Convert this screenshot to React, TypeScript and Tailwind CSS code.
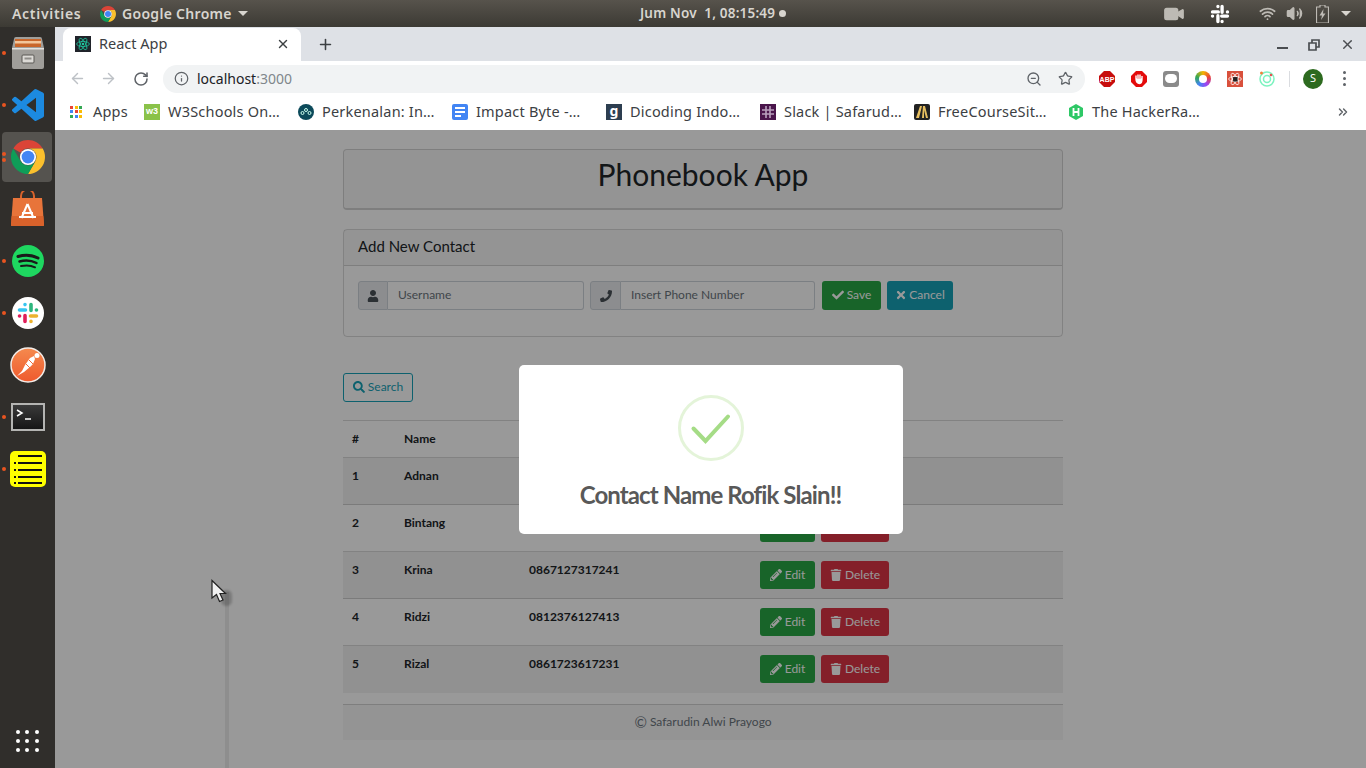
import React from 'react';
import {
  ArrowLeft,
  ArrowRight,
  RotateCw,
  Info,
  ZoomOut,
  Star,
  Plus,
  X,
  ChevronsRight,
  Video,
  Volume2,
  Wifi,
} from 'lucide-react';
import { FaUser, FaPhoneAlt, FaCheck, FaTimes, FaSearch, FaPencilAlt, FaTrash } from 'react-icons/fa';

const contacts = [
  { id: 1, name: 'Adnan', phone: '0812736127312' },
  { id: 2, name: 'Bintang', phone: '0812637126371' },
  { id: 3, name: 'Krina', phone: '0867127317241' },
  { id: 4, name: 'Ridzi', phone: '0812376127413' },
  { id: 5, name: 'Rizal', phone: '0861723617231' },
];

const ChromeLogo: React.FC<{ size: number }> = ({ size }) => (
  <svg width={size} height={size} viewBox="4 4 40 40">
    <path fill="#db4437" d="M6.68 14A20 20 0 0 1 41.32 14H24A10 10 0 0 0 15.34 19Z" />
    <path fill="#fbc02d" d="M41.32 14A20 20 0 0 1 24 44L32.66 29A10 10 0 0 0 24 14Z" />
    <path fill="#0f9d58" d="M24 44A20 20 0 0 1 6.68 14L15.34 29A10 10 0 0 0 32.66 29Z" />
    <circle cx="24" cy="24" r="9.5" fill="#fff" />
    <circle cx="24" cy="24" r="7.5" fill="#4285f4" />
  </svg>
);

const SlackMark: React.FC<{ size: number }> = ({ size }) => (
  <svg width={size} height={size} viewBox="0 0 24 24" strokeLinecap="round" strokeWidth="3.6" fill="none">
    <path stroke="#36c5f0" d="M3.5 9h6M9 3.5v.1" />
    <path stroke="#2eb67d" d="M15 3.5v6M20.5 9h-.1" />
    <path stroke="#ecb22e" d="M14.5 15h6M15 20.5v-.1" />
    <path stroke="#e01e5a" d="M9 14.5v6M3.5 15h.1" />
  </svg>
);

const DockItem: React.FC<{ dots?: number; active?: boolean; children: React.ReactNode }> = ({ dots = 0, active, children }) => (
  <div className="relative flex h-[52px] w-[55px] items-center justify-center">
    {active && <div className="absolute left-[2px] top-[1px] h-[50px] w-[50px] rounded-[4px] bg-[#55534f]" />}
    {dots > 0 && (
      <div className="absolute left-[2px] top-0 flex h-full flex-col justify-center gap-[2px]">
        {Array.from({ length: dots }).map((_, i) => (
          <span key={i} className="h-[4px] w-[4px] rounded-full bg-[#e95420]" />
        ))}
      </div>
    )}
    <div className="relative">{children}</div>
  </div>
);

const Dock = () => (
  <div className="flex h-full w-[55px] shrink-0 flex-col bg-[#302e2b]">
    <DockItem dots={1}>
      <svg width="32" height="34" viewBox="0 0 32 34">
        <path d="M2 3a2 2 0 0 1 2-2h24a2 2 0 0 1 2 2l2 9v19a2 2 0 0 1-2 2H2a2 2 0 0 1-2-2V12Z" fill="#a09e9a" />
        <rect x="3" y="3" width="26" height="8" fill="#c9662a" />
        <rect x="3" y="5" width="26" height="2.500" fill="#f2c59a" />
        <rect x="0" y="12" width="32" height="1.500" fill="#e4e2de" />
        <rect x="10" y="19" width="12" height="8" rx="1" fill="#dcdad6" stroke="#5a5854" />
        <rect x="12.500" y="21.500" width="7" height="2" fill="#8f8d89" />
      </svg>
    </DockItem>
    <DockItem dots={1}>
      <svg width="32" height="32" viewBox="0 0 24 24">
        <path
          fill="#1c8ae0"
          d="M23.15 2.587L18.21.21a1.494 1.494 0 0 0-1.705.29l-9.46 8.63-4.12-3.128a.999.999 0 0 0-1.276.057L.327 7.261A1 1 0 0 0 .326 8.74L3.899 12 .326 15.26a1 1 0 0 0 .001 1.479L1.65 17.94a.999.999 0 0 0 1.276.057l4.12-3.128 9.46 8.63a1.492 1.492 0 0 0 1.704.29l4.942-2.377A1.5 1.5 0 0 0 24 20.06V3.939a1.5 1.5 0 0 0-.85-1.352zm-5.146 14.861L10.826 12l7.178-5.448v10.896z"
        />
      </svg>
    </DockItem>
    <DockItem dots={2} active>
      <ChromeLogo size={34} />
    </DockItem>
    <DockItem>
      <svg width="33" height="36" viewBox="0 0 33 36">
        <path d="M10 8V5a6 6 0 0 1 13 0v3" fill="none" stroke="#d9622b" strokeWidth="2" />
        <path d="M2 7h29l2 27a1 1 0 0 1-1 1H1a1 1 0 0 1-1-1Z" fill="#e8743a" />
        <path d="M.7 25h31.600l.7 9a1 1 0 0 1-1 1H1a1 1 0 0 1-1-1Z" fill="#d9622b" />
        <path d="M16.500 13l-6 14M16.500 13l6 14M11 22h11M8 26h17" stroke="#fff" strokeWidth="2" fill="none" />
      </svg>
    </DockItem>
    <DockItem dots={1}>
      <svg width="32" height="32" viewBox="0 0 32 32" fill="none" strokeLinecap="round">
        <circle cx="16" cy="16" r="16" fill="#1ed760" />
        <path d="M6 11.5c7-2 14-1.500 20 1.500" stroke="#1a1a1a" strokeWidth="3" />
        <path d="M7.500 16.500c6-1.500 12-1 17 1.500" stroke="#1a1a1a" strokeWidth="2.500" />
        <path d="M9 21c5-1 10-.8 14 1.300" stroke="#1a1a1a" strokeWidth="2" />
      </svg>
    </DockItem>
    <DockItem dots={1}>
      <div className="flex h-[32px] w-[32px] items-center justify-center rounded-full bg-white">
        <SlackMark size={24} />
      </div>
    </DockItem>
    <DockItem>
      <svg width="36" height="36" viewBox="0 0 36 36">
        <defs>
          <linearGradient id="postman" x1="0" y1="0" x2="0" y2="1">
            <stop offset="0" stopColor="#f58a4e" />
            <stop offset="1" stopColor="#ef5a2e" />
          </linearGradient>
        </defs>
        <circle cx="18" cy="18" r="17" fill="url(#postman)" stroke="#f3ece8" strokeWidth="1.500" />
        <path d="M7 29l5-5 3-6 5-7 4-2 1 3-2 5-3 3-6 5Z" fill="#fff" />
        <path d="M19 13l4 4M16 17l4 4" stroke="#f4683a" strokeWidth="1" />
        <circle cx="27" cy="8.500" r="2.500" fill="#fff" />
      </svg>
    </DockItem>
    <DockItem dots={1}>
      <div className="flex h-[28px] w-[34px] items-start border-[2px] border-[#b4b4b2] bg-gradient-to-b from-[#3a3a3a] to-[#161616] p-[3px]">
        <svg width="24" height="14" viewBox="0 0 24 14" fill="none" stroke="#fff" strokeWidth="1.500">
          <path d="M1 2l5 3-5 3M9 11h6" />
        </svg>
      </div>
    </DockItem>
    <DockItem dots={1}>
      <svg width="36" height="36" viewBox="0 0 36 36">
        <rect width="36" height="36" rx="5" fill="#ffff00" />
        <path d="M8 5h24M8 12h24M8 19h24M8 26h24M8 32h24" stroke="#111" strokeWidth="2.200" />
        <path d="M4 12h2M4 19h2M4 26h2M4 32h2" stroke="#111" strokeWidth="2" />
      </svg>
    </DockItem>
    <div className="mt-auto mb-[16px] ml-[16px] grid w-[23px] grid-cols-3 gap-[5px]">
      {Array.from({ length: 9 }).map((_, i) => (
        <span key={i} className="h-[4px] w-[4px] rounded-full bg-white" />
      ))}
    </div>
  </div>
);

const TopBar = () => (
  <div className="flex h-[27px] shrink-0 items-center bg-gradient-to-b from-[#57534c] to-[#3c3a34] font-['Noto_Sans',sans-serif] text-[14px] font-semibold tracking-[0.2px] text-[#d8d5cf]">
    <span className="ml-[12px] w-[88px] tracking-[0.7px]">Activities</span>
    <ChromeLogo size={16} />
    <span className="ml-[6px] w-[111px] tracking-[0.3px]">Google Chrome</span>
    <span className="ml-[5px] h-0 w-0 border-x-[5px] border-t-[5px] border-x-transparent border-t-[#d8d5cf]" />
    <span className="ml-[392px] whitespace-pre text-[13.5px]">Jum Nov  1, 08:15:49</span>
    <span className="ml-[4px] h-[7px] w-[7px] rounded-full bg-[#d8d5cf]" />
    <div className="ml-auto flex items-center text-[#bdbab4]">
      <Video size={22} fill="currentColor" strokeWidth={1.500} />
      <div className="ml-[25px] flex h-[20px] w-[20px] items-center justify-center text-white">
        <svg width="20" height="20" viewBox="0 0 24 24" fill="none" stroke="#fff" strokeWidth="4" strokeLinecap="round">
          <path d="M3 9.500h7M9.500 3v.1M14.500 3v7M21 9.500h-.1M14 14.500h7M14.500 21v-.1M9.500 14v7M3 14.500h.1" />
        </svg>
      </div>
      <Wifi size={17} strokeWidth={2.500} className="ml-[29px]" />
      <Volume2 size={17} fill="currentColor" strokeWidth={2} className="ml-[10px]" />
      <svg width="13" height="18" viewBox="0 0 13 18" className="ml-[13px]">
        <path d="M4 0h5v2h3.500v16H.500V2H4Z" fill="none" stroke="currentColor" strokeWidth="1.200" />
        <path d="M7.500 4L3.500 10.500h2.500L5 15l4.500-6.500H7Z" fill="currentColor" />
      </svg>
      <span className="ml-[12px] mr-[15px] h-0 w-0 border-x-[5px] border-t-[5px] border-x-transparent border-t-[#d8d5cf]" />
    </div>
  </div>
);

const TabStrip = () => (
  <div className="flex h-[34px] shrink-0 items-end bg-[#dee1e6] font-['Noto_Sans',sans-serif]">
    <div className="ml-[8px] flex h-[33px] w-[238px] items-center rounded-t-[8px] bg-white px-[12px] pb-[2px]">
      <div className="flex h-[16px] w-[16px] items-center justify-center bg-[#20232a]">
        <svg width="14" height="14" viewBox="-11 -11 22 22" fill="none" stroke="#1fc8a0" strokeWidth="1.200">
          <circle r="2" fill="#1fc8a0" stroke="none" />
          <ellipse rx="10" ry="4" />
          <ellipse rx="10" ry="4" transform="rotate(60)" />
          <ellipse rx="10" ry="4" transform="rotate(120)" />
        </svg>
      </div>
      <span className="ml-[8px] text-[14.5px] text-[#3c4043]">React App</span>
      <X size={14} strokeWidth={2.500} className="ml-auto mr-[-1px] text-[#3c4043]" />
    </div>
    <Plus size={17} strokeWidth={2.200} className="ml-[16px] mb-[8px] text-[#3c4043]" />
    <div className="ml-auto mb-[9px] flex items-center text-[#4a4d51]">
      <div className="mt-[7px] h-[2px] w-[11px] bg-[#4a4d51]" />
      <svg width="12" height="12" viewBox="0 0 12 12" fill="none" stroke="currentColor" strokeWidth="1.700" className="ml-[20px]">
        <path d="M4 3.500V1h7v7H8.500M1 4h7v7H1Z" />
      </svg>
      <X size={15} strokeWidth={2.200} className="ml-[20px] mr-[11px]" />
    </div>
  </div>
);

const Toolbar = () => (
  <div className="flex h-[35px] shrink-0 items-center bg-white pl-[14px] font-['Noto_Sans',sans-serif]">
    <ArrowLeft size={17} className="text-[#bdc1c6]" />
    <ArrowRight size={17} className="ml-[14px] text-[#bdc1c6]" />
    <RotateCw size={16} strokeWidth={2.300} className="ml-[16px] text-[#5f6368]" />
    <div className="ml-[14px] flex h-[28px] w-[922px] items-center rounded-full bg-[#f1f3f4] pl-[11px] pr-[11px]">
      <Info size={15} className="text-[#5f6368]" />
      <span className="ml-[8px] text-[14px] text-[#202124]">
        localhost<span className="text-[#80868b]">:3000</span>
      </span>
      <ZoomOut size={16} className="ml-auto text-[#5f6368]" />
      <Star size={15} className="ml-[16px] mr-[1px] text-[#5f6368]" />
    </div>
    <div className="ml-[14px] flex items-center">
      <svg width="16" height="16" viewBox="0 0 16 16">
        <path d="M5 0h6l5 5v6l-5 5H5l-5-5V5Z" fill="#c70d0d" />
        <text x="8" y="11" textAnchor="middle" fontSize="7" fontWeight="700" fill="#fff" fontFamily="Liberation Sans, sans-serif">ABP</text>
      </svg>
      <svg width="16" height="16" viewBox="0 0 16 16" className="ml-[16px]">
        <path d="M5 0h6l5 5v6l-5 5H5l-5-5V5Z" fill="#e40b0b" />
        <path d="M5 7.500V4.500M7 7V3.500M9 7V3.500M11 8V5M5 8c0 3 1.500 4.500 3.500 4.500S11 11 11 8Z" stroke="#fff" strokeWidth="1.400" fill="#fff" />
      </svg>
      <div className="ml-[16px] flex h-[16px] w-[16px] items-center justify-center rounded-[3px] bg-[#8a8a8a]">
        <span className="h-[9px] w-[12px] rounded-[5px] bg-white" />
      </div>
      <div className="ml-[16px] h-[16px] w-[16px] rounded-full bg-[conic-gradient(#f4b400,#ea4335,#a142f4,#4285f4,#34a853,#f4b400)] p-[4px]">
        <div className="h-full w-full rounded-full bg-white" />
      </div>
      <div className="ml-[16px] flex h-[16px] w-[16px] items-center justify-center bg-[#d9503c]">
        <svg width="14" height="14" viewBox="-11 -11 22 22" fill="none" stroke="#fff" strokeWidth="1.200">
          <ellipse rx="10" ry="4" />
          <ellipse rx="10" ry="4" transform="rotate(60)" />
          <ellipse rx="10" ry="4" transform="rotate(120)" />
          <rect x="-3" y="-3" width="7" height="7" fill="#222" stroke="none" />
        </svg>
      </div>
      <svg width="16" height="16" viewBox="0 0 16 16" fill="none" className="ml-[16px]">
        <circle cx="8" cy="8" r="7" stroke="#7df3c0" strokeWidth="1.500" />
        <circle cx="8" cy="8" r="3.500" stroke="#7df3c0" strokeWidth="1.500" />
        <circle cx="2.500" cy="2" r="1.500" fill="#f0803c" />
        <circle cx="12" cy="4" r="1.300" fill="#e85050" />
      </svg>
      <span className="ml-[14px] h-[16px] w-px bg-[#dadce0]" />
      <div className="ml-[13px] flex h-[20px] w-[20px] items-center justify-center rounded-full bg-[#2d6a1f] text-[11px] text-white">S</div>
      <div className="ml-[20px] flex flex-col gap-[3px]">
        <span className="h-[3px] w-[3px] rounded-full bg-[#5f6368]" />
        <span className="h-[3px] w-[3px] rounded-full bg-[#5f6368]" />
        <span className="h-[3px] w-[3px] rounded-full bg-[#5f6368]" />
      </div>
    </div>
  </div>
);

const Bookmark: React.FC<{ icon: React.ReactNode; label: string }> = ({ icon, label }) => (
  <div className="flex w-[154px] shrink-0 items-center gap-[8px]">
    <div className="flex h-[16px] w-[16px] items-center justify-center">{icon}</div>
    <span className="whitespace-nowrap">{label}</span>
  </div>
);

const Bookmarks = () => (
  <div className="flex h-[34px] shrink-0 items-center bg-white pb-[3px] pl-[15px] font-['Noto_Sans',sans-serif] text-[14.5px] tracking-[0.2px] text-[#3c4043]">
    <div className="flex w-[74px] shrink-0 items-center gap-[11px]">
      <div className="grid grid-cols-3 gap-[1.500px]">
        {['#ea4335', '#fbbc04', '#34a853', '#4285f4', '#ea4335', '#fbbc04', '#34a853', '#4285f4', '#fbbc04'].map((c, i) => (
          <span key={i} className="h-[3px] w-[3px]" style={{ backgroundColor: c }} />
        ))}
      </div>
      <span>Apps</span>
    </div>
    <Bookmark
      label="W3Schools On…"
      icon={<div className="flex h-[16px] w-[16px] items-center justify-center bg-[#8ac249] font-['Liberation_Sans',sans-serif] text-[9px] font-bold leading-none tracking-normal text-white">w3</div>}
    />
    <Bookmark
      label="Perkenalan: In…"
      icon={
        <svg width="16" height="16" viewBox="0 0 16 16" fill="none">
          <circle cx="8" cy="8" r="8" fill="#0c4a5a" />
          <circle cx="4.500" cy="9" r="1.500" stroke="#cfe" />
          <circle cx="8" cy="6" r="1.500" stroke="#cfe" />
          <circle cx="11.500" cy="9" r="1.500" stroke="#cfe" />
        </svg>
      }
    />
    <Bookmark
      label="Impact Byte -…"
      icon={
        <div className="flex h-[16px] w-[16px] flex-col justify-center gap-[2px] rounded-[2px] bg-[#4285f4] px-[3px]">
          <span className="h-[2px] w-full bg-white" />
          <span className="h-[2px] w-full bg-white" />
          <span className="h-[2px] w-[6px] bg-white" />
        </div>
      }
    />
    <Bookmark
      label="Dicoding Indo…"
      icon={<div className="flex h-[16px] w-[16px] items-center justify-center bg-[#2d3e50] pb-[2px] text-[14px] font-bold leading-none text-white">g</div>}
    />
    <Bookmark
      label="Slack | Safarud…"
      icon={
        <div className="flex h-[16px] w-[16px] items-center justify-center bg-[#4a154b]">
          <svg width="12" height="12" viewBox="0 0 12 12" stroke="#b9a0bd" strokeWidth="1.600">
            <path d="M4 0v12M8 0v12M0 4h12M0 8h12" />
          </svg>
        </div>
      }
    />
    <Bookmark
      label="FreeCourseSit…"
      icon={
        <svg width="16" height="16" viewBox="0 0 16 16">
          <rect width="16" height="16" rx="2" fill="#222" />
          <path d="M2 14L6 2h2L5 14ZM8 14l1-12h2l3 12h-2L10 6 10 14Z" fill="#e8c060" />
        </svg>
      }
    />
    <Bookmark
      label="The HackerRa…"
      icon={
        <svg width="16" height="16" viewBox="0 0 16 16">
          <path d="M8 0l7 4v8l-7 4-7-4V4Z" fill="#2ec866" />
          <path d="M5.500 4v8M10.500 4v8M5.500 8h5" stroke="#fff" strokeWidth="1.800" />
        </svg>
      }
    />
    <ChevronsRight size={14} strokeWidth={2.500} className="ml-auto mr-[16px] text-[#5f6368]" />
  </div>
);

const PhonebookPage = () => (
  <div className="ml-[288px] w-[720px] pt-[19px] font-['Lato',sans-serif] text-[#212529]">
    <div className="flex h-[61px] items-center justify-center rounded-[4px] border border-b-2 border-black/15 bg-black/[0.03] pb-[9px] text-[30px]">
      Phonebook App
    </div>

    <div className="mt-[19px] h-[108px] rounded-[4px] border border-black/15">
      <div className="flex h-[36px] items-center border-b border-black/15 bg-black/[0.03] pb-[3px] pl-[14px] text-[15px]">Add New Contact</div>
      <div className="flex gap-[6px] pl-[14px] pt-[15px] text-[12px]">
        <div className="flex h-[29px] w-[226px]">
          <span className="flex w-[30px] items-center justify-center rounded-l-[3px] border border-[#ced4da] bg-[#e9ecef] text-[#495057]">
            <FaUser size={12} />
          </span>
          <input placeholder="Username" className="min-w-0 flex-1 rounded-r-[3px] border border-l-0 border-[#ced4da] bg-white px-[10px] pb-[2px] placeholder:text-[#6c757d]" />
        </div>
        <div className="mr-[1px] flex h-[29px] w-[225px]">
          <span className="flex w-[31px] items-center justify-center rounded-l-[3px] border border-[#ced4da] bg-[#e9ecef] text-[#495057]">
            <FaPhoneAlt size={12} className="-scale-x-100" />
          </span>
          <input placeholder="Insert Phone Number" className="min-w-0 flex-1 rounded-r-[3px] border border-l-0 border-[#ced4da] bg-white px-[10px] pb-[2px] placeholder:text-[#6c757d]" />
        </div>
        <button className="flex h-[29px] w-[59px] items-center justify-center gap-[3px] rounded-[3px] bg-[#28a745] pb-[1px] text-white">
          <FaCheck size={12} />
          Save
        </button>
        <button className="flex h-[29px] w-[66px] items-center justify-center gap-[2px] rounded-[3px] bg-[#17a2b8] pb-[1px] text-white">
          <FaTimes size={12} />
          Cancel
        </button>
      </div>
    </div>

    <button className="mt-[36px] flex h-[29px] w-[70px] items-center justify-center gap-[3px] rounded-[3px] border border-[#17a2b8] pb-[1px] text-[12px] text-[#17a2b8]">
      <FaSearch size={12} />
      Search
    </button>

    <table className="mt-[18px] w-full table-fixed border-collapse text-[12px] font-bold">
      <colgroup>
        <col className="w-[52px]" />
        <col className="w-[125px]" />
        <col className="w-[231px]" />
        <col />
      </colgroup>
      <thead>
        <tr className="h-[37px] border-t border-black/15 text-left">
          <th className="px-[9px]">#</th>
          <th className="px-[9px]">Name</th>
          <th className="px-[9px]">Phone Number</th>
          <th className="px-[9px]">Action</th>
        </tr>
      </thead>
      <tbody>
        {contacts.map((c) => (
          <tr key={c.id} className={`h-[47px] border-t border-black/15 align-top ${c.id % 2 === 1 ? 'bg-black/5' : ''}`}>
            <td className="px-[9px] pt-[9px]">{c.id}</td>
            <td className="px-[9px] pt-[9px]">{c.name}</td>
            <td className="px-[9px] pt-[9px]">{c.phone}</td>
            <td className="px-[9px] pt-[9px] font-normal">
              <div className="flex gap-[6px]">
                <button className="flex h-[28px] w-[55px] items-center justify-center gap-[3px] rounded-[3px] bg-[#28a745] text-white">
                  <FaPencilAlt size={12} />
                  Edit
                </button>
                <button className="flex h-[28px] w-[68px] items-center justify-center gap-[3px] rounded-[3px] bg-[#dc3545] text-white">
                  <FaTrash size={12} />
                  Delete
                </button>
              </div>
            </td>
          </tr>
        ))}
      </tbody>
    </table>

    <div className="mt-[11px] flex h-[36px] items-center justify-center gap-[3px] border-t border-black/15 bg-black/[0.03] text-[12px] text-[#6c757d]">
      <span className="text-[15px] leading-none">©</span>
      Safarudin Alwi Prayogo
    </div>
  </div>
);

const SuccessModal = () => (
  <div className="absolute inset-0 flex items-center justify-center bg-black/40 font-['Lato',sans-serif]">
    <div className="flex h-[169px] w-[384px] flex-col items-center rounded-[5px] bg-white pt-[30px]">
      <svg width="66" height="66" viewBox="0 0 66 66" fill="none">
        <circle cx="33" cy="33" r="31.500" stroke="#e4f4d9" strokeWidth="3" />
        <path d="M15.500 33.500L27.500 46L50 21.500" stroke="#a5dc86" strokeWidth="4" strokeLinecap="round" strokeLinejoin="miter" />
      </svg>
      <h2 className="mt-[18px] text-[24px] font-bold leading-[32px] tracking-[-0.9px] text-[#595959]">Contact Name Rofik Slain!!</h2>
    </div>
  </div>
);

const App: React.FC = () => {
  return (
    <div className="relative flex h-screen w-full flex-col overflow-hidden bg-white">
      <TopBar />
      <div className="flex min-h-0 flex-1">
        <Dock />
        <div className="flex min-w-0 flex-1 flex-col">
          <TabStrip />
          <Toolbar />
          <Bookmarks />
          <div className="relative min-h-0 flex-1 overflow-hidden bg-white">
            <PhonebookPage />
            <SuccessModal />
          </div>
        </div>
      </div>
      {/* cursor and the trail it leaves */}
      <div className="absolute left-[225px] top-[592px] h-[176px] w-[4px] bg-black/[0.07]" />
      <div className="absolute left-[221px] top-[590px] h-[16px] w-[11px] rounded-[5px] bg-black/20 blur-[1px]" />
      <svg width="18" height="26" viewBox="0 0 18 26" className="absolute left-[210px] top-[579px]">
        <path d="M2 1.500V19l4.500-3.500 3 7 3.500-1.500-3-6.500h5.500Z" fill="#f0f0f0" stroke="#222" strokeWidth="1.200" />
      </svg>
    </div>
  );
};

export default App;
